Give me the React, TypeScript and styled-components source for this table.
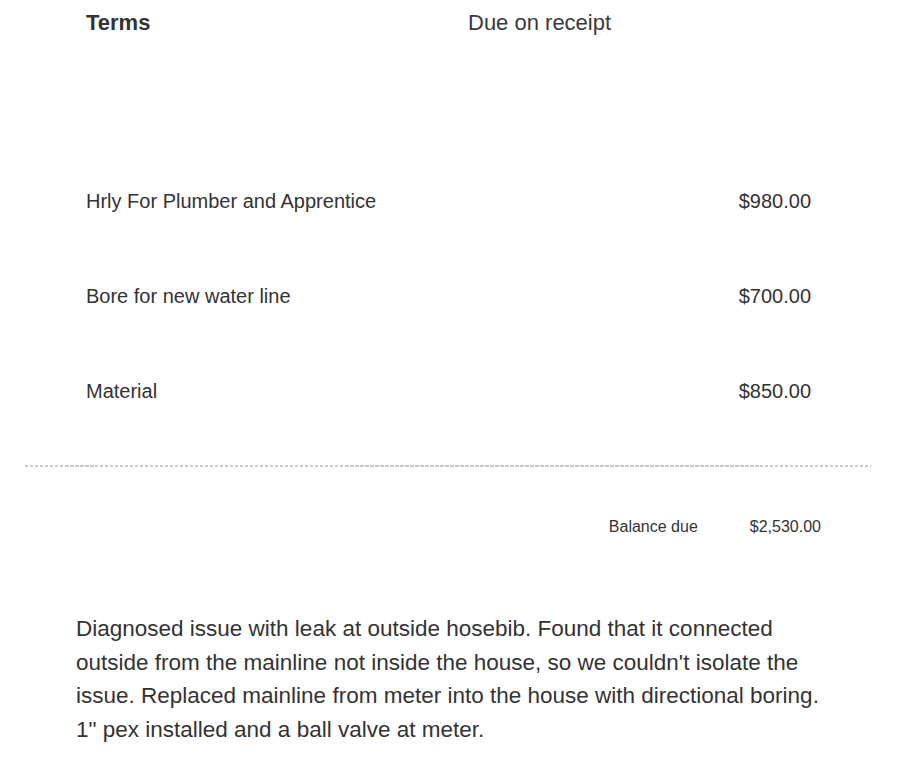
import React from "react";
import styled, { createGlobalStyle } from "styled-components";

const items = [
  { label: "Hrly For Plumber and Apprentice", amount: "$980.00" },
  { label: "Bore for new water line", amount: "$700.00" },
  { label: "Material", amount: "$850.00" },
];

const GlobalStyle = createGlobalStyle`
  html, body {
    margin: 0;
    padding: 0;
    background: #ffffff;
  }
  body {
    font-family: "Liberation Sans", Arial, Helvetica, sans-serif;
    color: #333333;
  }
`;

const Page = styled.main`
  width: 924px;
  min-height: 761px;
  padding-top: 10px;
  box-sizing: border-box;
`;

const TermsRow = styled.section`
  display: grid;
  grid-template-columns: 382px 1fr;
  padding-left: 86px;
  font-size: 22px;
  line-height: 26px;
`;

const TermsLabel = styled.div`
  font-weight: bold;
  color: #333333;
`;

const TermsValue = styled.div`
  color: #3a3a3a;
`;

const ItemList = styled.section`
  margin-top: 118px;
  padding: 0 113px 0 86px;
`;

const ItemRow = styled.div`
  display: flex;
  justify-content: space-between;
  align-items: center;
  height: 95px;
  font-size: 20px;
  color: #333333;
`;

const Divider = styled.hr`
  margin: 26px 53px 0 25px;
  height: 2px;
  border: 0;
  background: repeating-linear-gradient(
    to right,
    #c9c9c9 0 3.5px,
    transparent 3.5px 5px
  );
`;

const BalanceRow = styled.div`
  display: flex;
  justify-content: flex-end;
  align-items: center;
  gap: 52px;
  margin-top: 50px;
  padding-right: 103px;
  font-size: 16px;
  line-height: 20px;
  color: #333333;
`;

const Notes = styled.p`
  margin: 75px 0 0 76px;
  width: 760px;
  font-size: 22.5px;
  line-height: 33.5px;
  color: #333333;
`;

export default function App() {
  return (
    <>
      <GlobalStyle />
      <Page>
        <TermsRow>
          <TermsLabel>Terms</TermsLabel>
          <TermsValue>Due on receipt</TermsValue>
        </TermsRow>
        <ItemList>
          {items.map((item) => (
            <ItemRow key={item.label}>
              <span>{item.label}</span>
              <span>{item.amount}</span>
            </ItemRow>
          ))}
        </ItemList>
        <Divider />
        <BalanceRow>
          <span>Balance due</span>
          <span>$2,530.00</span>
        </BalanceRow>
        <Notes>
          Diagnosed issue with leak at outside hosebib. Found that it connected
          outside from the mainline not inside the house, so we couldn't
          isolate the issue. Replaced mainline from meter into the house with
          directional boring. 1" pex installed and a ball valve at meter.
        </Notes>
      </Page>
    </>
  );
}
